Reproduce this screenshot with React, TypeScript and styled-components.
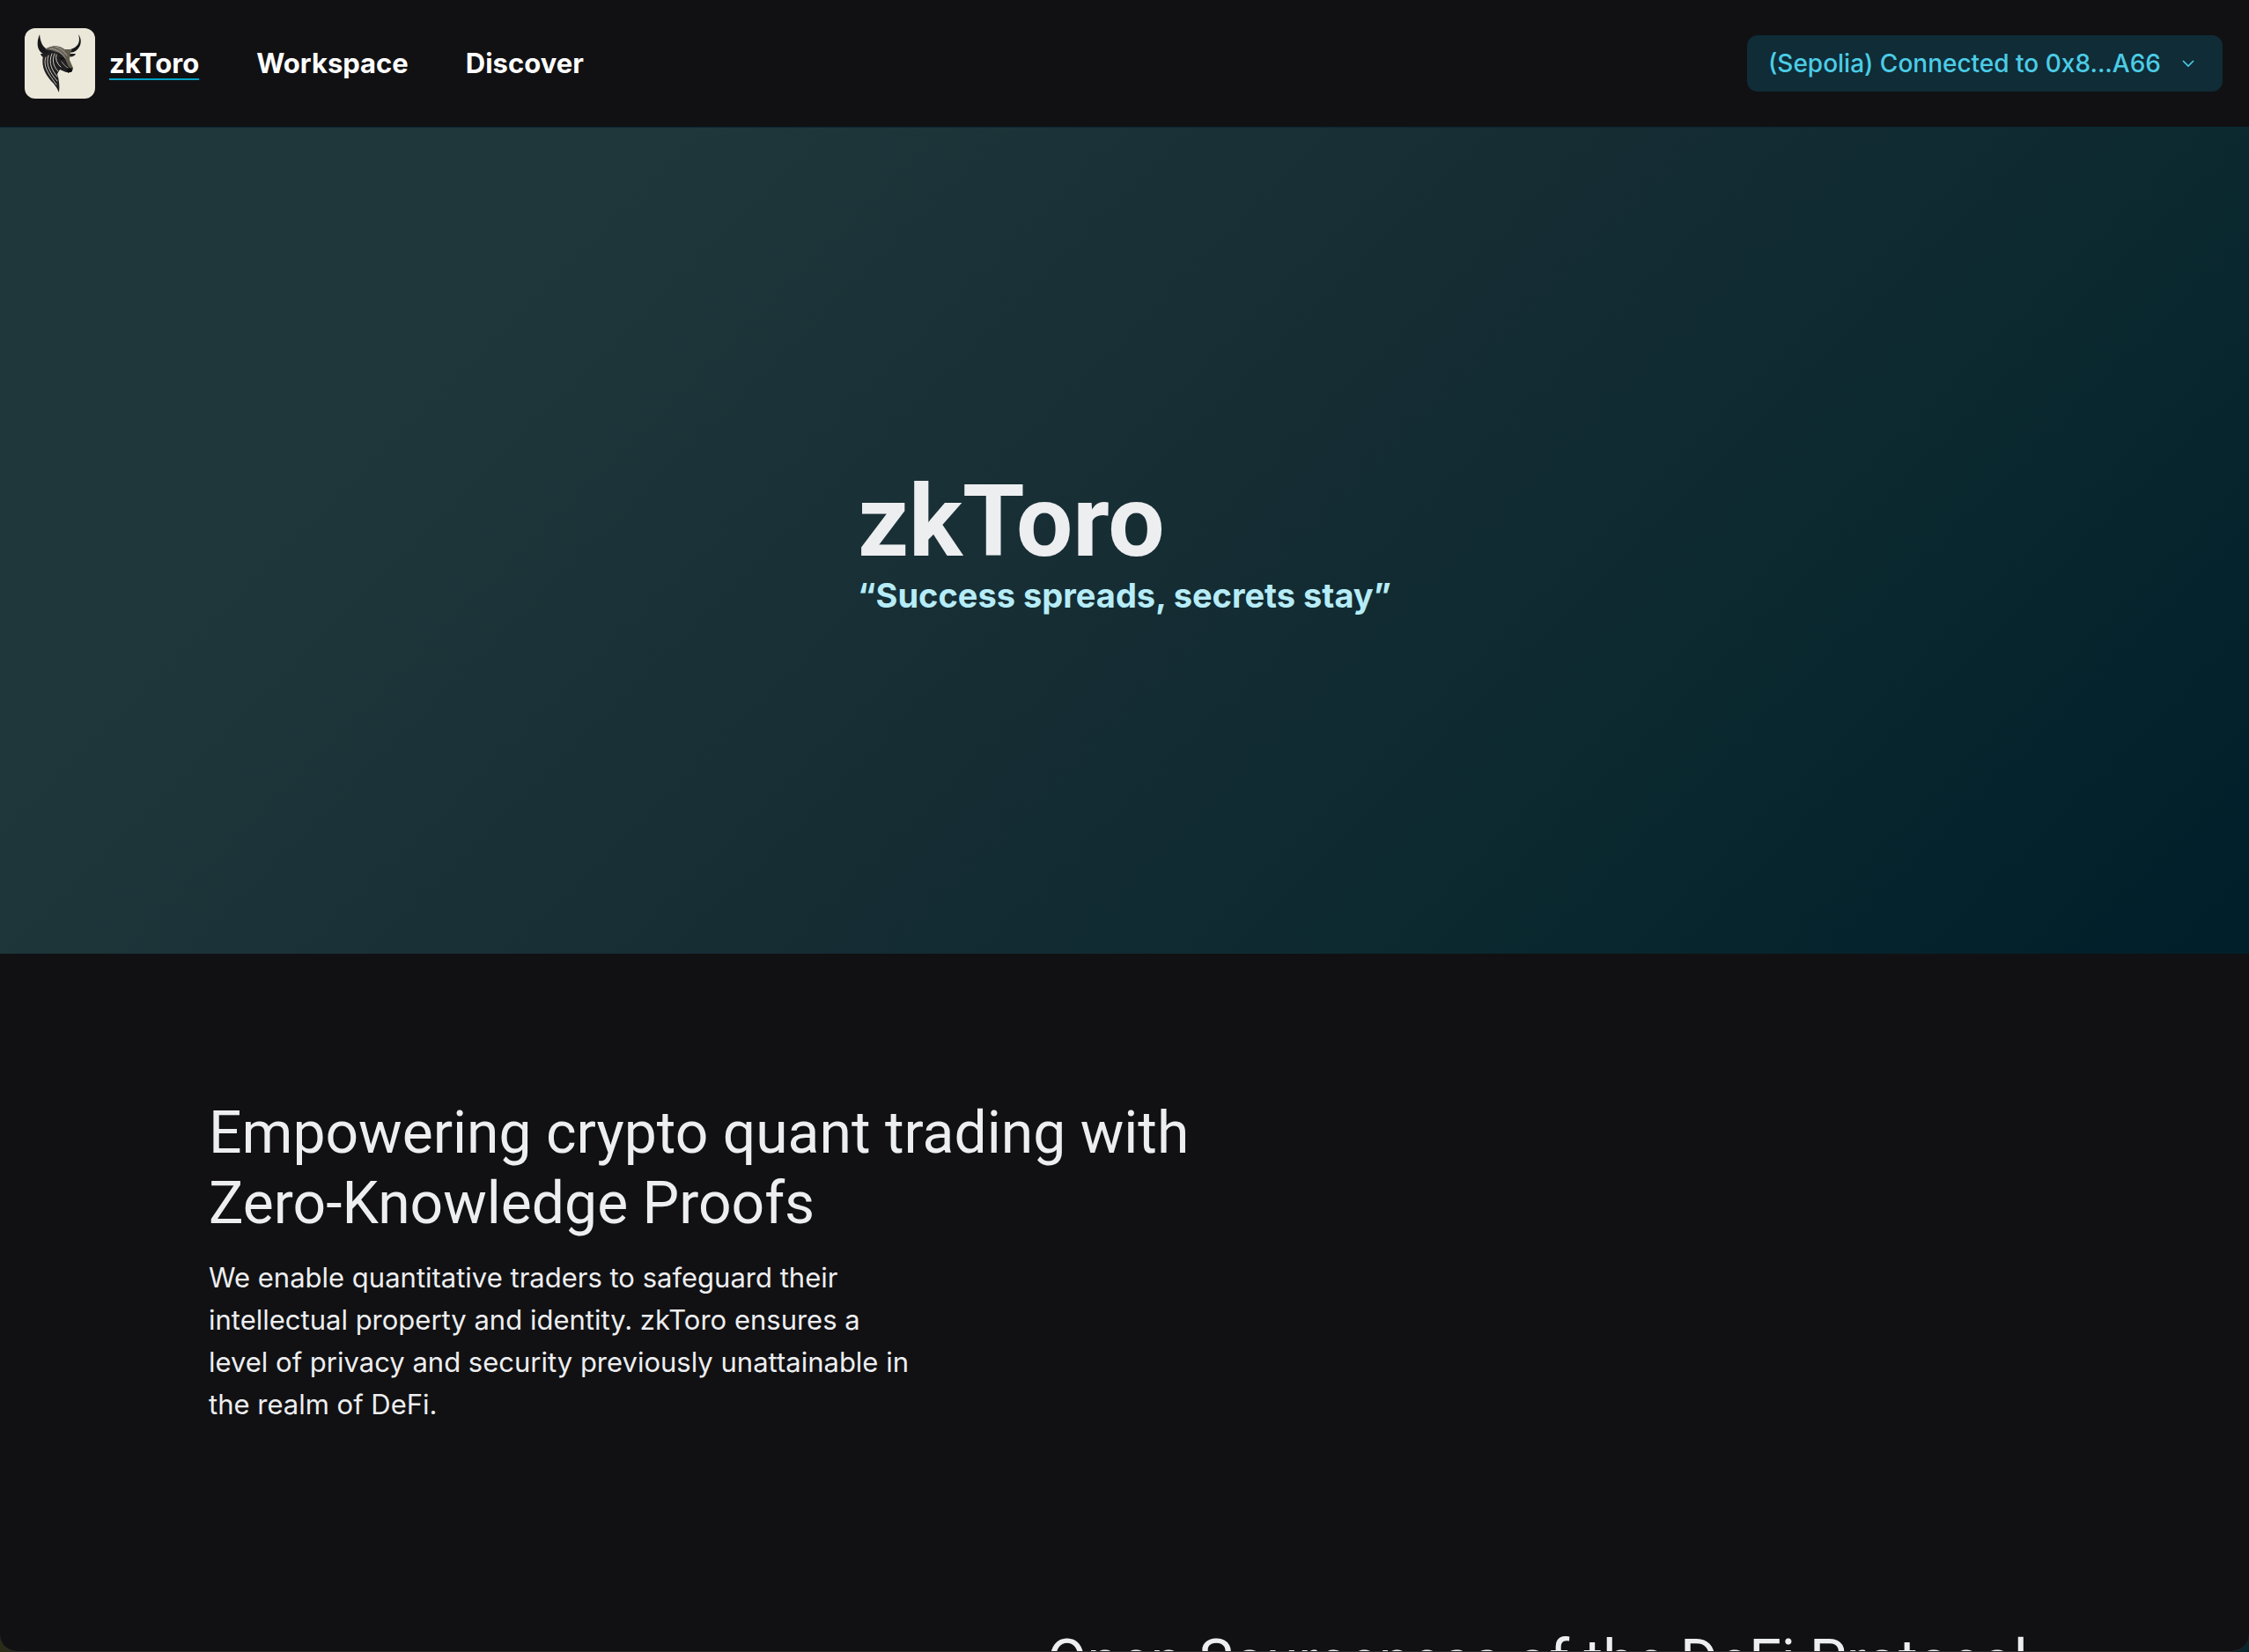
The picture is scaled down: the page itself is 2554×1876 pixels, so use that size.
import React from 'react';
import styled, { createGlobalStyle } from 'styled-components';

const GlobalStyle = createGlobalStyle`
  *, *::before, *::after { box-sizing: border-box; }
  body {
    margin: 0;
    background: linear-gradient(90deg, #2a2c18, #06262d);
    color: #edeef0;
    font-family: Inter, 'Liberation Sans', sans-serif;
    -webkit-font-smoothing: antialiased;
  }
  h1, h2, p { margin: 0; }
`;

const Page = styled.div`
  display: flex;
  flex-direction: column;
  height: 100vh;
  overflow: hidden;
  border-bottom: 1px solid #29292b;
  border-radius: 0 0 20px 20px;
  background: #111113;
`;

const Header = styled.header`
  display: flex;
  flex: none;
  align-items: center;
  justify-content: space-between;
  padding: 32px 30px 32px 28px;
  border-bottom: 1px solid #082a32;
`;

const Nav = styled.nav`
  display: flex;
  align-items: center;
  gap: 65px;
`;

const Brand = styled.div`
  display: flex;
  align-items: center;
  gap: 16px;
`;

const LogoTile = styled.svg`
  display: block;
  width: 80px;
  height: 80px;
  border-radius: 12px;
  background: #ebe8da;
`;

const NavLink = styled.a<{ $active?: boolean }>`
  color: #ffffff;
  font-size: 31px;
  font-weight: 700;
  line-height: 40px;
  text-decoration: ${p => (p.$active ? 'underline' : 'none')};
  text-decoration-color: #00a2c7;
  text-decoration-thickness: 2px;
  text-underline-offset: 6px;
  text-decoration-skip-ink: none;
`;

const WalletButton = styled.button`
  display: flex;
  align-items: center;
  gap: 24px;
  height: 64px;
  padding: 0 32px 0 24px;
  border: 0;
  border-radius: 12px;
  background: #0f2c37;
  color: #4ccce6;
  font: 500 28px/40px Inter, 'Liberation Sans', sans-serif;
`;

const Main = styled.main`
  flex: 1;
  min-height: 0;
  overflow: hidden;
`;

const Hero = styled.section`
  display: flex;
  align-items: center;
  justify-content: center;
  height: 50vh;
  background: linear-gradient(135deg, #1f373b 22%, #152c33 53%, #0d2a30 70%, #001f2a 98%);
`;

const HeroTitle = styled.h1`
  font-family: Roboto, Inter, sans-serif;
  font-size: 114px;
  font-weight: 700;
  line-height: 124px;
`;

const Tagline = styled.p`
  color: #b6ecf7;
  font-size: 38px;
  font-weight: 700;
  line-height: 44px;
`;

const Features = styled.div`
  display: flex;
  flex-direction: column;
  gap: 228px;
  max-width: 2272px;
  margin: 0 auto;
  padding: 164px 96px;
`;

const Feature = styled.section<{ $end?: boolean }>`
  display: flex;
  flex-direction: column;
  gap: 20px;
  width: 100%;
  max-width: 1128px;
  align-self: ${p => (p.$end ? 'flex-end' : 'flex-start')};
`;

const FeatureTitle = styled.h2`
  font-family: Roboto, Inter, sans-serif;
  font-size: 66px;
  font-weight: 400;
  line-height: 80px;
`;

const FeatureText = styled.p`
  max-width: 800px;
  font-size: 31px;
  line-height: 48px;
`;

const BullLogo = () => (
  <LogoTile viewBox="0 0 80 80" role="img" aria-label="Bull head">
    <path d="M17 7C13 16 14 26 21 29C25 30 29 28 33 25C23 26 18 19 17 7Z" fill="#17181a" />
    <path d="M61 7C64 16 60 22 52 24L45 24C48 28 54 29 59 25C65 20 65 12 61 7Z" fill="#17181a" />
    <path d="M18 29C19 33 22 34 25 33L29 28ZM50 29L58 29C57 32 53 33 50 32Z" fill="#202022" />
    <path d="M21 31C18 45 25 55 33 63Q37 68 39 73C40 66 39 58 37 52L40 47L47 50L53 50L55 46L51 40L50 31C45 21 35 17 23 24L28 27Z" fill="#202022" />
    <path d="M23 24Q36 16 47 25Q50 30 49 36Q39 25 23 24Z" fill="#6b675d" />
    <path d="M46 24L54 24Q51 28 51 36L55 45Q51 46 49 42L46 35Z" fill="#625c4d" />
    <g fill="none" stroke="#dcd8ca" strokeWidth="0.9" strokeLinecap="round">
      <path d="M24 33C20 44 29 54 36 64" />
      <path d="M27 31C23 42 30 52 37 60" />
      <path d="M31 29C26 40 32 49 37 55" />
      <path d="M34 29C30 38 34 45 38 49" />
      <path d="M36 30Q34 38 41 44" />
      <path d="M29 23Q40 24 46 34" stroke="#aaa597" />
      <path d="M35 21Q43 23 48 31" stroke="#aaa597" />
      <path d="M42 38Q45 43 49 45" stroke="#aaa597" />
    </g>
    <path d="M39 33L45 34L42 36ZM48 46L53 46L54 49L49 51Z" fill="#0b0b0d" />
  </LogoTile>
);

const Chevron = () => (
  <svg width="14" height="8" viewBox="0 0 14 8" fill="none" stroke="currentColor" strokeWidth="1.7" aria-hidden="true">
    <path d="M1 1L7 7L13 1" />
  </svg>
);

export default function App() {
  return (
    <Page>
      <GlobalStyle />
      <Header>
        <Nav aria-label="Main">
          <Brand>
            <BullLogo />
            <NavLink href="#home" $active aria-current="page">zkToro</NavLink>
          </Brand>
          <NavLink href="#workspace">Workspace</NavLink>
          <NavLink href="#discover">Discover</NavLink>
        </Nav>
        <WalletButton type="button">
          (Sepolia) Connected to 0x8...A66
          <Chevron />
        </WalletButton>
      </Header>
      <Main>
        <Hero>
          <div>
            <HeroTitle>zkToro</HeroTitle>
            <Tagline>“Success spreads, secrets stay”</Tagline>
          </div>
        </Hero>
        <Features>
          <Feature>
            <FeatureTitle>Empowering crypto quant trading with Zero-Knowledge Proofs</FeatureTitle>
            <FeatureText>
              We enable quantitative traders to safeguard their intellectual property and identity. zkToro
              ensures a level of privacy and security previously unattainable in the realm of DeFi.
            </FeatureText>
          </Feature>
          <Feature $end>
            <FeatureTitle>Open-Sourceness of the DeFi Protocol</FeatureTitle>
          </Feature>
        </Features>
      </Main>
    </Page>
  );
}
